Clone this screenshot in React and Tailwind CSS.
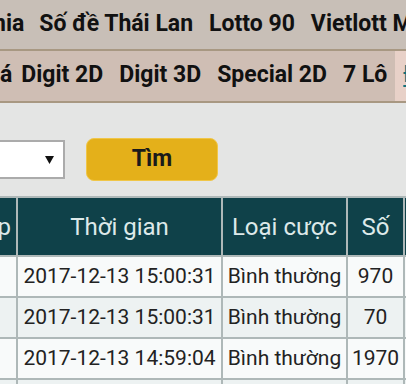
const TOP_ITEMS = ['Số đề Thái Lan', 'Lotto 90', 'Vietlott Max 3D'];
const SUB_ITEMS = ['Digit 2D', 'Digit 3D', 'Special 2D', '7 Lô'];

const ROWS = [
    { time: '2017-12-13 15:00:31', type: 'Bình thường', num: '970' },
    { time: '2017-12-13 15:00:31', type: 'Bình thường', num: '70' },
    { time: '2017-12-13 14:59:04', type: 'Bình thường', num: '1970' },
    { time: '2017-12-13 14:58:47', type: 'Bình thường', num: '19' },
];

const GRID_CLS = "grid grid-cols-[80px_203px_123px_55px_120px] gap-[2px]";

const App = () => {
    return (
        <div className="w-full h-screen overflow-hidden bg-[#e4e5e4] font-['Roboto',sans-serif]">
            {/* main menu, scrolled sideways */}
            <div className="h-[51px] bg-[#c8bfb7] border-b-2 border-[#a89882] flex whitespace-nowrap overflow-hidden pt-[7px] text-[23px] font-bold text-[#111] leading-normal">
                <span className="-ml-[7px] pr-[7px]">nia</span>
                {TOP_ITEMS.map(t => <span key={t} className="px-2">{t}</span>)}
            </div>

            {/* sub menu */}
            <div className="h-[52px] bg-[#cfbeb4] border-b-2 border-[#a89882] flex whitespace-nowrap overflow-hidden text-[23px] font-bold text-[#111] leading-normal">
                <span className="pt-[7px] pr-[1px]">á</span>
                {SUB_ITEMS.map(t => <span key={t} className="px-2 pt-[7px]">{t}</span>)}
                <span className="px-2 pt-[7px] bg-[#e8d1c8] text-[#17707a] underline underline-offset-[3px]">Đề đầu</span>
            </div>

            {/* filter */}
            <div className="flex items-center mt-[35px] h-[43px]">
                <div className="-ml-[55px] w-[120px] h-[39px] bg-white border-2 border-[#ababab] flex items-center justify-end pr-[9px]">
                    <svg width="9" height="8" viewBox="0 0 9 8"><polygon points="0,0 9,0 4.5,8" fill="#111" /></svg>
                </div>
                <button className="ml-[21px] w-[132px] h-[43px] rounded-lg bg-[#e4b01a] border border-[#f0c648] text-[23px] font-bold text-[#1a1a1a]">Tìm</button>
            </div>

            {/* results */}
            <div className={`${GRID_CLS} mt-[15px] -ml-[66px] w-max p-[2px] bg-[#aeb8b8]`}>
                <div className="h-[57px] bg-[#0f4149] text-[#dde9e9] text-[24px] flex items-center justify-end pr-[5px] whitespace-nowrap">Nhập</div>
                <div className="h-[57px] bg-[#0f4149] text-[#dde9e9] text-[24px] flex items-center justify-center whitespace-nowrap">Thời gian</div>
                <div className="h-[57px] bg-[#0f4149] text-[#dde9e9] text-[24px] flex items-center justify-center whitespace-nowrap">Loại cược</div>
                <div className="h-[57px] bg-[#0f4149] text-[#dde9e9] text-[24px] flex items-center justify-center whitespace-nowrap">Số</div>
                <div className="h-[57px] bg-[#0f4149] text-[#dde9e9] text-[24px] flex items-center justify-center whitespace-nowrap">Tiền</div>

                {ROWS.map((r, i) => {
                    const bg = i % 2 === 1 ? 'bg-[#edf2f2]' : 'bg-[#f8fafa]';
                    const cell = `${bg} h-[39px] flex items-center justify-center whitespace-nowrap text-[21px] text-[#222]`;
                    return [
                        <div key={`a${i}`} className={cell}></div>,
                        <div key={`b${i}`} className={cell}>{r.time}</div>,
                        <div key={`c${i}`} className={cell}>{r.type}</div>,
                        <div key={`d${i}`} className={cell}>{r.num}</div>,
                        <div key={`e${i}`} className={cell}>1</div>,
                    ];
                })}
            </div>
        </div>
    );
};

export default App;
